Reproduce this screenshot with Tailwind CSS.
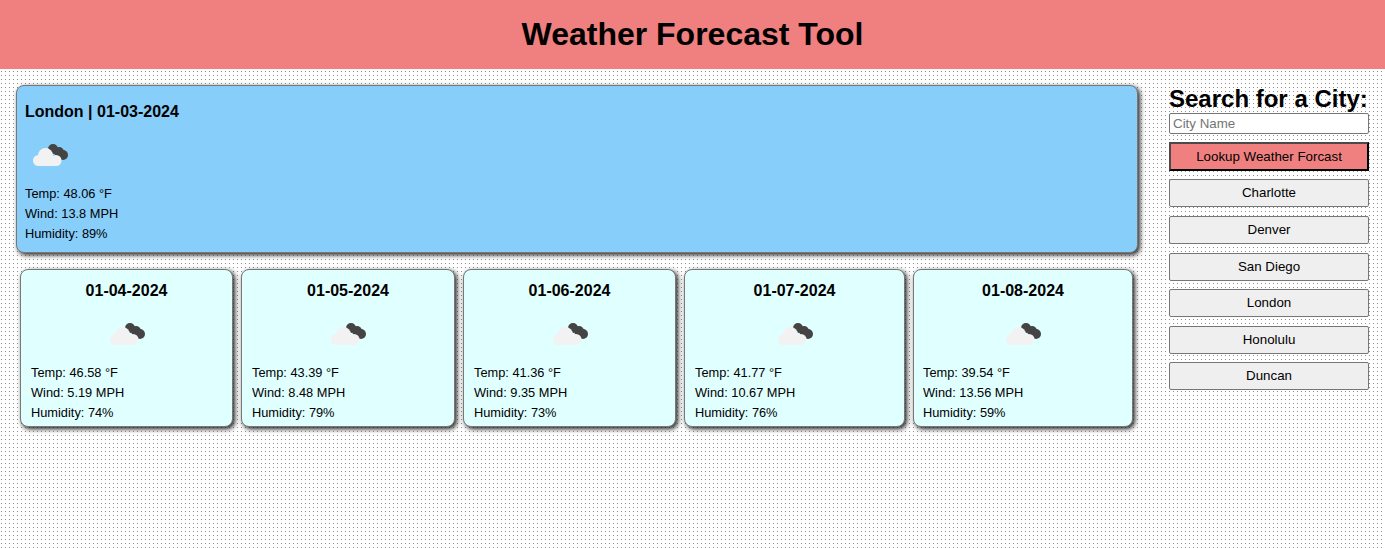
<!DOCTYPE html>
<html lang="en">
<head>
  <meta charset="UTF-8" />
  <title>Weather Forecast Tool</title>
  <script src="https://cdn.jsdelivr.net/npm/@tailwindcss/browser@4"></script>
</head>
<body class="min-h-screen font-['Liberation_Sans',Arial,sans-serif] text-black bg-white bg-[linear-gradient(90deg,#fff_1px,transparent_1px,transparent_2px,#fff_2px),linear-gradient(#fff_3px,#909090_3px)] bg-[length:4px_4px]">
  <svg class="hidden">
    <symbol id="cloud" viewBox="0 0 50 50">
      <g fill="#444">
        <circle cx="28" cy="18" r="5" /><circle cx="34" cy="21" r="5" /><circle cx="38" cy="24" r="5" />
      </g>
      <g fill="#f2f2f2">
        <circle cx="13.500" cy="29.500" r="5.500" /><circle cx="20.500" cy="24.500" r="7.500" /><circle cx="31" cy="29.500" r="5.500" />
        <rect x="13.500" y="26" width="17.500" height="9" />
      </g>
    </symbol>
  </svg>

  <header class="h-[69px] bg-[#f08080] flex items-center justify-center pb-[2px]">
    <h1 class="text-[32px] font-bold leading-none">Weather Forecast Tool</h1>
  </header>

  <div class="flex pl-4 pr-4">
    <main class="w-[1122px] pt-4">
      <section class="h-[168px] bg-[#87cefa] border border-[#777] rounded-lg shadow-[2px_2px_5px_#222] pl-2 pt-4">
        <h2 class="text-base font-bold leading-5">London | 01-03-2024</h2>
        <svg class="w-[50px] h-[50px] mt-[9px]"><use href="#cloud" /></svg>
        <div class="text-[12.8px] leading-5 mt-[3px]">
          <p>Temp: 48.06 °F</p>
          <p>Wind: 13.8 MPH</p>
          <p>Humidity: 89%</p>
        </div>
      </section>

      <section class="flex gap-2 pl-1 mt-4">
        <article class="w-[213px] h-[158px] bg-[#e0ffff] border border-[#777] rounded-lg shadow-[2px_2px_5px_#222] px-[9px] pt-[11px]">
          <h3 class="text-base font-bold leading-5 text-center">01-04-2024</h3>
          <svg class="w-[50px] h-[50px] mx-auto mt-[9px]"><use href="#cloud" /></svg>
          <div class="text-[12.8px] leading-5 mt-[3px] ml-[1px]">
            <p>Temp: 46.58 °F</p>
            <p>Wind: 5.19 MPH</p>
            <p>Humidity: 74%</p>
          </div>
        </article>
        <article class="w-[214px] h-[158px] bg-[#e0ffff] border border-[#777] rounded-lg shadow-[2px_2px_5px_#222] px-[9px] pt-[11px]">
          <h3 class="text-base font-bold leading-5 text-center">01-05-2024</h3>
          <svg class="w-[50px] h-[50px] mx-auto mt-[9px]"><use href="#cloud" /></svg>
          <div class="text-[12.8px] leading-5 mt-[3px] ml-[1px]">
            <p>Temp: 43.39 °F</p>
            <p>Wind: 8.48 MPH</p>
            <p>Humidity: 79%</p>
          </div>
        </article>
        <article class="w-[213px] h-[158px] bg-[#e0ffff] border border-[#777] rounded-lg shadow-[2px_2px_5px_#222] px-[9px] pt-[11px]">
          <h3 class="text-base font-bold leading-5 text-center">01-06-2024</h3>
          <svg class="w-[50px] h-[50px] mx-auto mt-[9px]"><use href="#cloud" /></svg>
          <div class="text-[12.8px] leading-5 mt-[3px] ml-[1px]">
            <p>Temp: 41.36 °F</p>
            <p>Wind: 9.35 MPH</p>
            <p>Humidity: 73%</p>
          </div>
        </article>
        <article class="w-[221px] h-[158px] bg-[#e0ffff] border border-[#777] rounded-lg shadow-[2px_2px_5px_#222] px-[9px] pt-[11px]">
          <h3 class="text-base font-bold leading-5 text-center">01-07-2024</h3>
          <svg class="w-[50px] h-[50px] mx-auto mt-[9px]"><use href="#cloud" /></svg>
          <div class="text-[12.8px] leading-5 mt-[3px] ml-[1px]">
            <p>Temp: 41.77 °F</p>
            <p>Wind: 10.67 MPH</p>
            <p>Humidity: 76%</p>
          </div>
        </article>
        <article class="w-[220px] h-[158px] bg-[#e0ffff] border border-[#777] rounded-lg shadow-[2px_2px_5px_#222] px-[9px] pt-[11px]">
          <h3 class="text-base font-bold leading-5 text-center">01-08-2024</h3>
          <svg class="w-[50px] h-[50px] mx-auto mt-[9px]"><use href="#cloud" /></svg>
          <div class="text-[12.8px] leading-5 mt-[3px]">
            <p>Temp: 39.54 °F</p>
            <p>Wind: 13.56 MPH</p>
            <p>Humidity: 59%</p>
          </div>
        </article>
      </section>
    </main>

    <aside class="w-[200px] ml-[31px] pt-4 flex flex-col">
      <h2 class="text-2xl font-bold leading-7 whitespace-nowrap">Search for a City:</h2>
      <input type="text" placeholder="City Name" class="h-[21px] bg-white border border-[#767676] rounded-[2px] px-[3px] pb-[1px] text-[13.33px] placeholder:text-[#757575]" />
      <button class="h-[29px] mt-2 bg-[#f08080] border-2 border-solid border-t-[#4a4a4a] border-l-[#4a4a4a] border-r-black border-b-black text-[13.33px]">Lookup Weather Forcast</button>
      <button class="h-[28px] mt-2 pb-[1px] bg-[#efefef] border border-[#767676] rounded-[2px] text-[13.33px]">Charlotte</button>
      <button class="h-[28px] mt-[9px] pb-[1px] bg-[#efefef] border border-[#767676] rounded-[2px] text-[13.33px]">Denver</button>
      <button class="h-[28px] mt-[9px] pb-[1px] bg-[#efefef] border border-[#767676] rounded-[2px] text-[13.33px]">San Diego</button>
      <button class="h-[28px] mt-[8px] pb-[1px] bg-[#efefef] border border-[#767676] rounded-[2px] text-[13.33px]">London</button>
      <button class="h-[28px] mt-[9px] pb-[1px] bg-[#efefef] border border-[#767676] rounded-[2px] text-[13.33px]">Honolulu</button>
      <button class="h-[28px] mt-[8px] pb-[1px] bg-[#efefef] border border-[#767676] rounded-[2px] text-[13.33px]">Duncan</button>
    </aside>
  </div>
</body>
</html>
